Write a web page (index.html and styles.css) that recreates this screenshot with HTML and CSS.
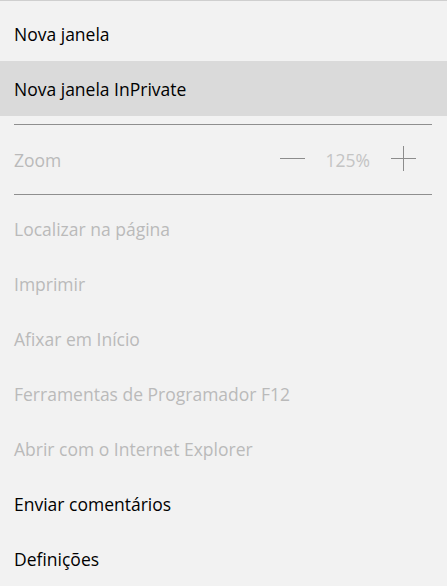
FILE: index.html
```html
<!DOCTYPE html>
<html>
<head lang="pt">
    <meta charset="UTF-8">
    <title>Menu</title>
    <link rel="stylesheet" href="styles.css">
</head>
<body>
<div id="menu">
    <ul class="group first">
        <li class="item">Nova janela</li>
        <li class="item hover">Nova janela InPrivate</li>
    </ul>
    <div class="sep"></div>
    <div class="zoom-row">
        <span class="label">Zoom</span>
        <div class="zoom-ctrl">
            <span class="btn minus"></span>
            <span class="value">125%</span>
            <span class="btn plus"></span>
        </div>
    </div>
    <div class="sep"></div>
    <ul class="group last">
        <li class="item off">Localizar na página</li>
        <li class="item off">Imprimir</li>
        <li class="item off">Afixar em Início</li>
        <li class="item off">Ferramentas de Programador F12</li>
        <li class="item off">Abrir com o Internet Explorer</li>
        <li class="item">Enviar comentários</li>
        <li class="item">Definições</li>
    </ul>
</div>
</body>
</html>
```

FILE: styles.css
```css
*{
    margin: 0;
    padding: 0;
}
ul{
    list-style: none;
}
body{
    background: #f2f2f2;
    font-family: "Open Sans", "Noto Sans", sans-serif;
    font-size: 17.5px;
    color: #000;
}
#menu{
    border-top: 1px solid #cfcfcf;
    width: 447px;
    height: 585px;
    overflow: hidden;
}
.group.first{
    padding-top: 5px;
}
.group.last{
    padding-top: 6px;
}
.item{
    height: 55px;
    display: flex;
    align-items: center;
    padding-left: 14px;
}
.item.hover{
    background: #dadada;
}
.item.off{
    color: #bababa;
}
.sep{
    height: 1px;
    margin: 0 15px 0 14px;
    background: #8f8f8f;
}
.group.first + .sep{
    margin-top: 8px;
}
.zoom-row{
    height: 69px;
    display: flex;
    align-items: center;
    justify-content: space-between;
    padding: 0 31px 0 14px;
    color: #bababa;
}
.zoom-ctrl{
    display: flex;
    align-items: center;
    gap: 21px;
}
.zoom-ctrl .value{
    color: #c4c4c4;
}
.btn{
    position: relative;
    width: 25px;
    height: 25px;
    margin-bottom: 2px;
}
.btn:before,.btn:after{
    content: "";
    position: absolute;
    background: #8c8c8c;
}
.btn:before{
    left: 0;
    right: 0;
    top: 12px;
    height: 1px;
}
.plus:after{
    top: 0;
    bottom: 0;
    left: 12px;
    width: 1px;
}
```
